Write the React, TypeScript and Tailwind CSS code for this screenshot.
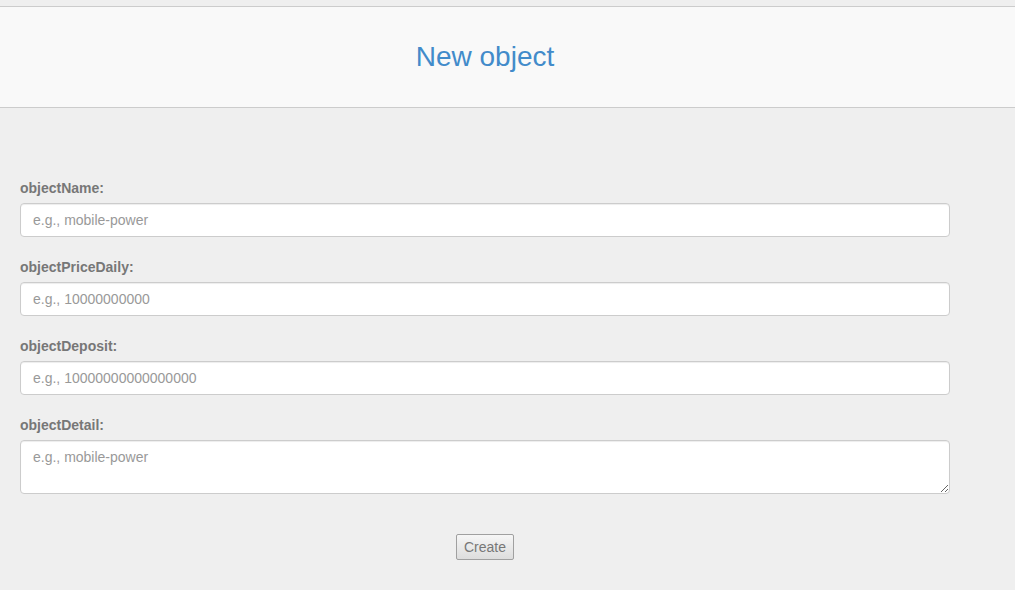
import React from "react";

const fields = [
  { label: "objectName:", placeholder: "e.g., mobile-power" },
  { label: "objectPriceDaily:", placeholder: "e.g., 10000000000" },
  { label: "objectDeposit:", placeholder: "e.g., 10000000000000000" },
];

export default function App() {
  return (
    <div
      className="min-h-[590px] bg-[#efefef] pt-[6px]"
      style={{ fontFamily: '"Liberation Sans", Arial, sans-serif' }}
    >
      <div className="h-[102px] border-y border-[#cccccc] bg-[#f9f9f9] flex items-center">
        <div className="w-[930px] ml-[20px] text-center text-[28px] leading-[32px] text-[#428bca]">
          New object
        </div>
      </div>
      <div className="w-[930px] ml-[20px] pt-[69px]">
        {fields.map((f) => (
          <div key={f.label} className="mb-[19px]">
            <label className="block pt-[1px] text-[14px] leading-[20px] font-bold text-[#777777] mb-[5px]">
              {f.label}
            </label>
            <input
              type="text"
              placeholder={f.placeholder}
              className="block w-full h-[34px] px-[12px] text-[14px] bg-white border border-[#cccccc] rounded-[4px] shadow-[inset_0_1px_1px_rgba(0,0,0,0.075)] placeholder:text-[#999999] outline-none"
            />
          </div>
        ))}
        <div>
          <label className="block pt-[1px] text-[14px] leading-[20px] font-bold text-[#777777] mb-[5px]">
            objectDetail:
          </label>
          <textarea
            placeholder="e.g., mobile-power"
            className="block w-full h-[54px] px-[12px] py-[6px] text-[14px] leading-[20px] bg-white border border-[#cccccc] rounded-[4px] shadow-[inset_0_1px_1px_rgba(0,0,0,0.075)] placeholder:text-[#999999] outline-none"
          />
        </div>
        <div className="flex justify-center pt-[40px]">
          <button className="h-[26px] w-[58px] text-[14px] leading-[20px] text-[#777777] border border-[#a0a0a0] rounded-[2px] bg-gradient-to-b from-[#f6f6f6] to-[#dddddd]">
            Create
          </button>
        </div>
      </div>
    </div>
  );
}
